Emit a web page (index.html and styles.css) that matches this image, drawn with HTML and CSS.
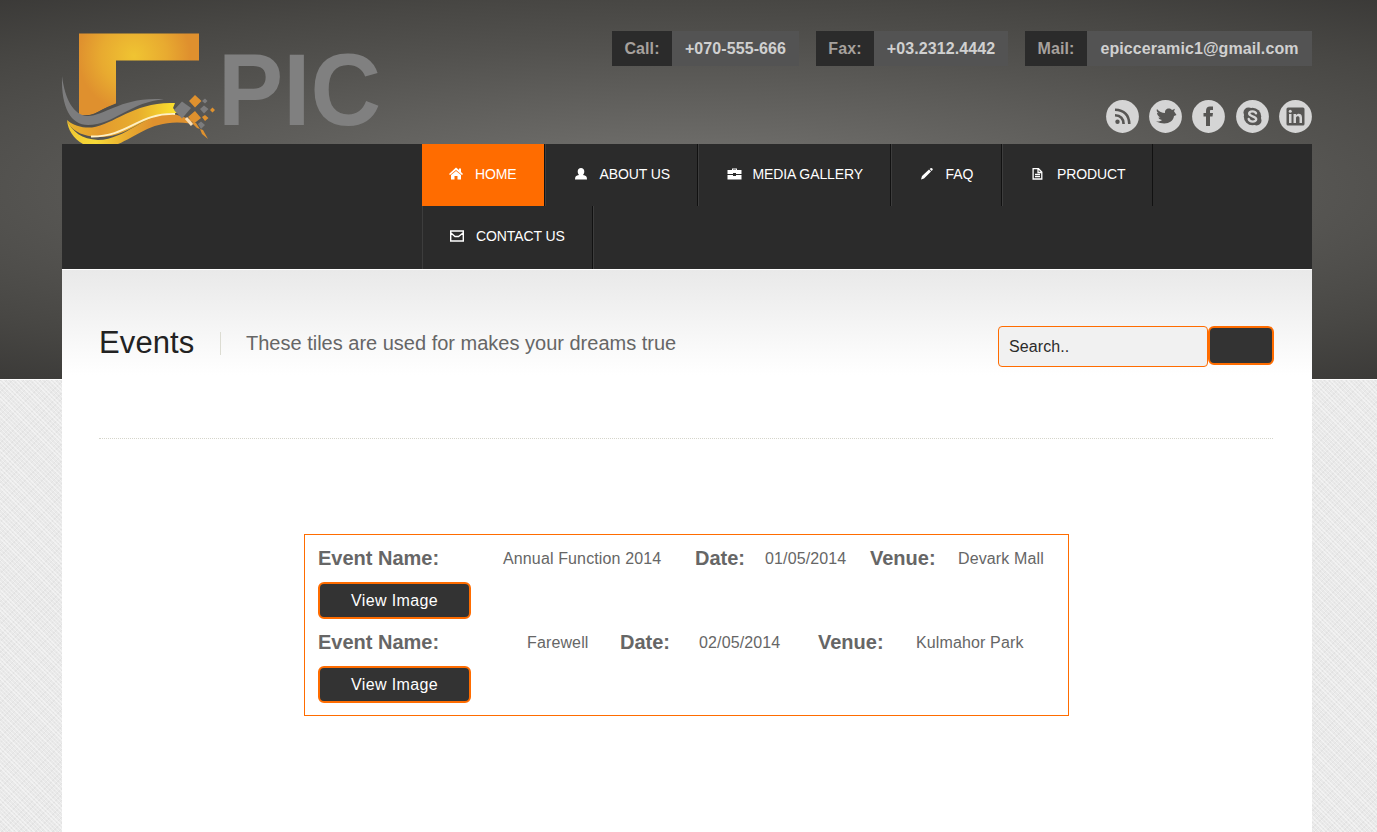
FILE: index.html
```html
<!DOCTYPE html>
<html lang="en">
<head>
<meta charset="utf-8">
<title>Events</title>
<link rel="stylesheet" href="styles.css">
</head>
<body>
<div class="page">
  <header class="header">
    <svg class="logo" width="330" height="124" viewBox="0 0 330 124">
      <defs>
        <radialGradient id="gold" gradientUnits="userSpaceOnUse" cx="72" cy="36" r="66">
          <stop offset="0" stop-color="#f0c432"/><stop offset=".5" stop-color="#e8aa30"/><stop offset=".85" stop-color="#df902e"/>
        </radialGradient>
        <linearGradient id="band" gradientUnits="userSpaceOnUse" x1="5" y1="0" x2="114" y2="0">
          <stop offset="0" stop-color="#e9b52d"/><stop offset=".3" stop-color="#e39a2e"/><stop offset=".65" stop-color="#e8ae2e"/><stop offset="1" stop-color="#fae12e"/>
        </linearGradient>
        <linearGradient id="underside" gradientUnits="userSpaceOnUse" x1="5" y1="0" x2="120" y2="0">
          <stop offset="0" stop-color="#f0c832"/><stop offset=".25" stop-color="#f7da38"/><stop offset=".5" stop-color="#e9ae30"/><stop offset=".75" stop-color="#df912e"/>
        </linearGradient>
      </defs>
      <path fill="url(#gold)" d="M17 13.500H137V40.500H54V84Q42 88 32 94Q26 96 17 95Z"/>
      <path fill="#4f4e4c" d="M15 95Q26 97 36 92Q44 87 55 83L57 89L30 108L14 104Z"/>
      <path fill="#7c7c7d" d="M0 56C3 80 12 95 25 96C42 97 60 76 102 79.500C70 81 52 105 26 105C9 105-1 88 0 56Z"/>
      <path fill="url(#underside)" d="M5 100C10 112 20 119 36 120C66 119 82 92 112 94L131 100L128 103.500C92 98 76 116 56 124H21C11 118 6 110 5 100Z"/>
      <path fill="url(#band)" d="M5 100C12 106 20 108 30 107.500C53 104 73 81 113 83L111 88L115 93C80 94 69 116 40 117C24 117 10 113 5 100Z"/>
      <path fill="none" stroke="#fff0c4" stroke-width="1.800" d="M29 116.500C66 117 76 93 113 94"/>
      <path fill="#7c7c7d" d="M112 90L120 81.500L129 88L120 98.500Z"/>
      <path fill="#df912e" d="M127 81L133 75L139.500 81L133 87.500ZM126 97L133 91L139 98L132 103.500Z"/>
      <path fill="#7c7c7d" d="M140 81L143 78.500L145.500 81L143 83.500ZM138 89L142 85.500L146.500 89L142 93.500ZM136 104L139 101.500L143 105L139 109Z"/>
      <path fill="#df912e" d="M140 97L143 95L146.500 98L143 101ZM148 90L150.500 87.500L153 90L150.500 92.500ZM129 102L134 103L138 109L135 108ZM138 109L141 110L146 119L140 114Z"/>
      <path stroke="#f8ddb4" stroke-width="3" d="M124 98L130 105"/>
      <text class="logo-text" x="156" y="104.500" textLength="163" lengthAdjust="spacingAndGlyphs">PIC</text>
    </svg>
    <div class="header-side">
      <div class="contacts">
        <div class="contact"><span class="contact-label call">Call:</span><span class="contact-value call-value">+070-555-666</span></div>
        <div class="contact"><span class="contact-label fax">Fax:</span><span class="contact-value fax-value">+03.2312.4442</span></div>
        <div class="contact"><span class="contact-label mail">Mail:</span><span class="contact-value mail-value">epicceramic1@gmail.com</span></div>
      </div>
      <div class="social">
        <svg width="33" height="33" viewBox="0 0 33 33"><circle cx="16.500" cy="16.500" r="16.400" fill="#d5d5d5"/><circle cx="11.500" cy="21.700" r="2.200" fill="#575654"/><path d="M9 15.300Q17.300 15.600 17.600 24M9 9.700Q22.800 10.200 23.300 24" fill="none" stroke="#575654" stroke-width="2.600"/></svg>
        <svg width="33" height="33" viewBox="0 0 33 33"><circle cx="16.500" cy="16.500" r="16.400" fill="#d5d5d5"/><path fill="#575654" d="M8 9C10 11.500 13 13 16 13C15.500 9 20 7 23 10L26 8.800L25 11.300L27.500 15L25 16C24 23 16 25.500 7 21.500C10 21.500 12 21 13 20C10.500 19.500 9.700 18.500 9.500 17.500H11.500C9 16.500 8 14.500 8 12.800L9.700 13.300C7.800 12 7.300 10.500 8 9Z"/></svg>
        <svg width="33" height="33" viewBox="0 0 33 33"><circle cx="16.500" cy="16.500" r="16.400" fill="#d5d5d5"/><path fill="#575654" d="M14 26V16.500H11.500V13H14V11C14 7.800 15.500 6.500 18 6.500H21V10H19C18 10 18 10.500 18 11.500V13H21L20.500 16.500H18V26Z"/></svg>
        <svg width="33" height="33" viewBox="0 0 33 33"><circle cx="16.500" cy="16.500" r="16.400" fill="#d5d5d5"/><g fill="#575654"><circle cx="16.500" cy="16.500" r="8.700"/><circle cx="12.500" cy="12.500" r="5"/><circle cx="20.500" cy="20.500" r="5"/></g><path d="M20 13.300C19 10.700 13.200 10.700 13.200 13.600C13.200 17 20.200 15.600 20.200 19.300C20.200 22.400 13.500 22.400 12.700 19" fill="none" stroke="#d5d5d5" stroke-width="2.400" stroke-linecap="round"/></svg>
        <svg width="33" height="33" viewBox="0 0 33 33"><circle cx="16.500" cy="16.500" r="16.400" fill="#d5d5d5"/><rect x="7.500" y="7.500" width="18" height="18" rx="1.500" fill="#575654"/><g fill="#d5d5d5"><rect x="10" y="14" width="2.500" height="9"/><circle cx="11.250" cy="11.300" r="1.500"/><path d="M14.500 14H17V15.300C18.500 13 23 13.200 23 17.500V23H20.500V18C20.500 15.500 17 15.500 17 18V23H14.500Z"/></g></svg>
      </div>
    </div>
  </header>
  <nav class="nav">
    <ul class="menu">
      <li class="item active w-home"><svg class="icon" viewBox="0 0 14 14"><path fill="#fff" d="M7 .5L10 3V1.500H12V5L14 7L13 8L7 3L1 8L0 7ZM7 4L12 8V12.500H8.500V9H5.500V12.500H2V8Z"/></svg>HOME</li>
      <li class="item w-about"><svg class="icon" viewBox="0 0 14 14"><path fill="#fff" d="M7 1C9 1 10.300 2.300 10.300 4.500C10.300 6 9.700 7.200 9 8C12 8.300 13 9.500 13 12.500H1C1 9.500 2 8.300 5 8C4.300 7.200 3.700 6 3.700 4.500C3.700 2.300 5 1 7 1Z"/></svg>ABOUT US</li>
      <li class="item w-media"><svg class="icon wide" viewBox="0 0 15 14"><path fill="#fff" fill-rule="evenodd" d="M5 3V1.500H10V3H14.500V7H9V6H6V7H.5V3ZM6 2.500V3H9V2.500ZM.5 8H6V9H9V8H14.500V12.500H.5Z"/></svg>MEDIA GALLERY</li>
      <li class="item w-faq"><svg class="icon" viewBox="0 0 14 14"><path fill="#fff" d="M1 12.500L2 9L9 2.500L11 4.500L4 11.500ZM9.700 1.900L10.500 1.200Q11.500.6 12.400 1.500T12.300 3.300L11.600 4Z"/></svg>FAQ</li>
      <li class="item w-product"><svg class="icon" viewBox="0 0 14 14"><path fill="none" stroke="#fff" stroke-width="1.300" d="M2.100 1.700H7.500L10.800 5V12H2.100ZM7 2V5.500H10.500M4 7.500H9M4 9.700H9"/></svg>PRODUCT</li>
      <li class="item w-contact"><svg class="icon" viewBox="0 0 14 14"><path fill="none" stroke="#fff" stroke-width="1.400" d="M.7 2H13.300V12H.7ZM1 4L5 7.500H8.500L13 4"/></svg>CONTACT US</li>
      <li class="menu-end"></li>
    </ul>
  </nav>
  <main class="content">
    <div class="title-row">
      <h1 class="title">Events</h1>
      <p class="tagline">These tiles are used for makes your dreams true</p>
      <form class="search">
        <input class="search-field" type="text" value="Search.." aria-label="Search">
        <button class="search-button" type="button" aria-label="Go"></button>
      </form>
    </div>
    <section class="events">
      <div class="event first">
        <b>Event Name:</b><span>Annual Function 2014</span><b>Date:</b><span>01/05/2014</span><b>Venue:</b><span>Devark Mall</span>
      </div>
      <button class="view" type="button">View Image</button>
      <div class="event second">
        <b>Event Name:</b><span>Farewell</span><b>Date:</b><span>02/05/2014</span><b>Venue:</b><span>Kulmahor Park</span>
      </div>
      <button class="view" type="button">View Image</button>
    </section>
  </main>
</div>
</body>
</html>
```
FILE: styles.css
```css
* { box-sizing: border-box; }
html { height: 100%; overflow: hidden; }
body {
  margin: 0;
  height: 832px;
  overflow: hidden;
  font-family: "Liberation Sans", Arial, sans-serif;
  font-size: 16px;
  color: #666;
  background:
    linear-gradient(#fff, #fff) 0 379px / 100% 1px no-repeat,
    radial-gradient(ellipse 1200px 250px at 688px 190px, #72716e 0%, #6b6a67 20%, #53524f 57%, #484744 76%, #383735 100%) 0 0 / 100% 379px no-repeat,
    repeating-linear-gradient(45deg, rgba(255,255,255,.42) 0 1px, transparent 1px 3px),
    repeating-linear-gradient(-45deg, rgba(200,200,200,.22) 0 1px, transparent 1px 4px),
    #e9e9e9;
}
.page { width: 1250px; height: 832px; margin-left: 62px; display: flex; flex-direction: column; }
.header { height: 144px; padding-top: 20px; display: flex; justify-content: space-between; }
.logo { display: block; overflow: visible; }
.logo-text { font: bold 101.500px "Liberation Sans", Arial, sans-serif; fill: #808080; }
.header-side { padding-top: 11px; display: flex; flex-direction: column; align-items: flex-end; gap: 34px; }
.contacts { display: flex; gap: 17px; }
.contact { display: flex; height: 35px; line-height: 35px; font-weight: bold; text-align: center; letter-spacing: .09px; }
.contact-label { background: #2b2b2b; color: #a6a19d; }
.contact-value { background: #535353; color: #d0d0d0; }
.call { width: 60px; }
.call-value { width: 127px; }
.fax { width: 58px; }
.fax-value { width: 134px; }
.mail { width: 62px; }
.mail-value { width: 225px; }
.social { display: flex; gap: 10.300px; }
.nav { height: 125px; background: #2b2b2b; padding-left: 360px; flex: none; }
.menu { list-style: none; margin: 0; padding: 0; display: flex; flex-wrap: wrap; width: 780px; }
.item {
  display: flex; align-items: center; gap: 12px; height: 62px; padding: 0 0 2px 27.500px;
  border-left: 1px solid #3d3d3d; border-right: 1px solid #111;
  color: #fff; font-size: 14px; letter-spacing: -.1px; white-space: nowrap;
}
.active { background: #ff6c00; background-clip: padding-box; border-left-color: #ff6c00; padding-left: 26px; }
.icon { width: 14px; height: 14px; flex: none; }
.wide { width: 15px; margin-right: -1px; }
.w-home { width: 123px; }
.w-about { width: 153px; }
.w-media { width: 193px; }
.w-faq { width: 111px; }
.w-product { width: 151px; padding-left: 28px; }
.w-contact { width: 171px; height: 63px; padding-bottom: 3px; padding-left: 27px; }
.menu-end { width: 1px; height: 63px; background: #3d3d3d; }
.content {
  flex: 1; padding: 0 38px 0 37px; border-top: 1px solid #fff;
  background: linear-gradient(#e9e9e9, #fff 105px) #fff;
}
.title-row { height: 169px; border-bottom: 1px dotted #d5d5cb; display: flex; align-items: flex-start; padding-top: 56px; margin-right: 1px; }
.title { margin: 0; font-size: 31px; font-weight: normal; line-height: 33px; color: #222; width: 121px; letter-spacing: .1px; }
.tagline { margin: 6px 0 0; padding-left: 25px; border-left: 1px solid #dcdcd2; font-size: 20px; line-height: 23px; height: 23px; }
.search { margin-left: auto; margin-right: -1px; display: flex; align-items: flex-start; }
.search-field { width: 210px; height: 41px; border: 1px solid #ff6c00; border-radius: 4px; background: #f1f1f1; padding: 0 10px; font: 16px "Liberation Sans", Arial, sans-serif; letter-spacing: .1px; color: #2b2b2b; }
.search-button { width: 66px; height: 39px; border: 2px solid #ff6c00; border-radius: 6px; background: #333; }
.events { width: 765px; height: 182px; margin: 95px 0 0 205px; border: 1px solid #ff6c00; padding: 8px 13px; }
.event { display: grid; align-items: center; height: 31px; white-space: nowrap; }
.event b { font-size: 20px; }
.event span { letter-spacing: .13px; }
.first { grid-template-columns: 185px 192px 70px 105px 88px 1fr; }
.second { grid-template-columns: 209px 93px 79px 119px 98px 1fr; }
.view { display: block; width: 153px; height: 37px; margin: 8px 0; border: 2px solid #ff6c00; border-radius: 6px; background: #333; color: #fff; font: 16px "Liberation Sans", Arial, sans-serif; letter-spacing: .35px; }
```
